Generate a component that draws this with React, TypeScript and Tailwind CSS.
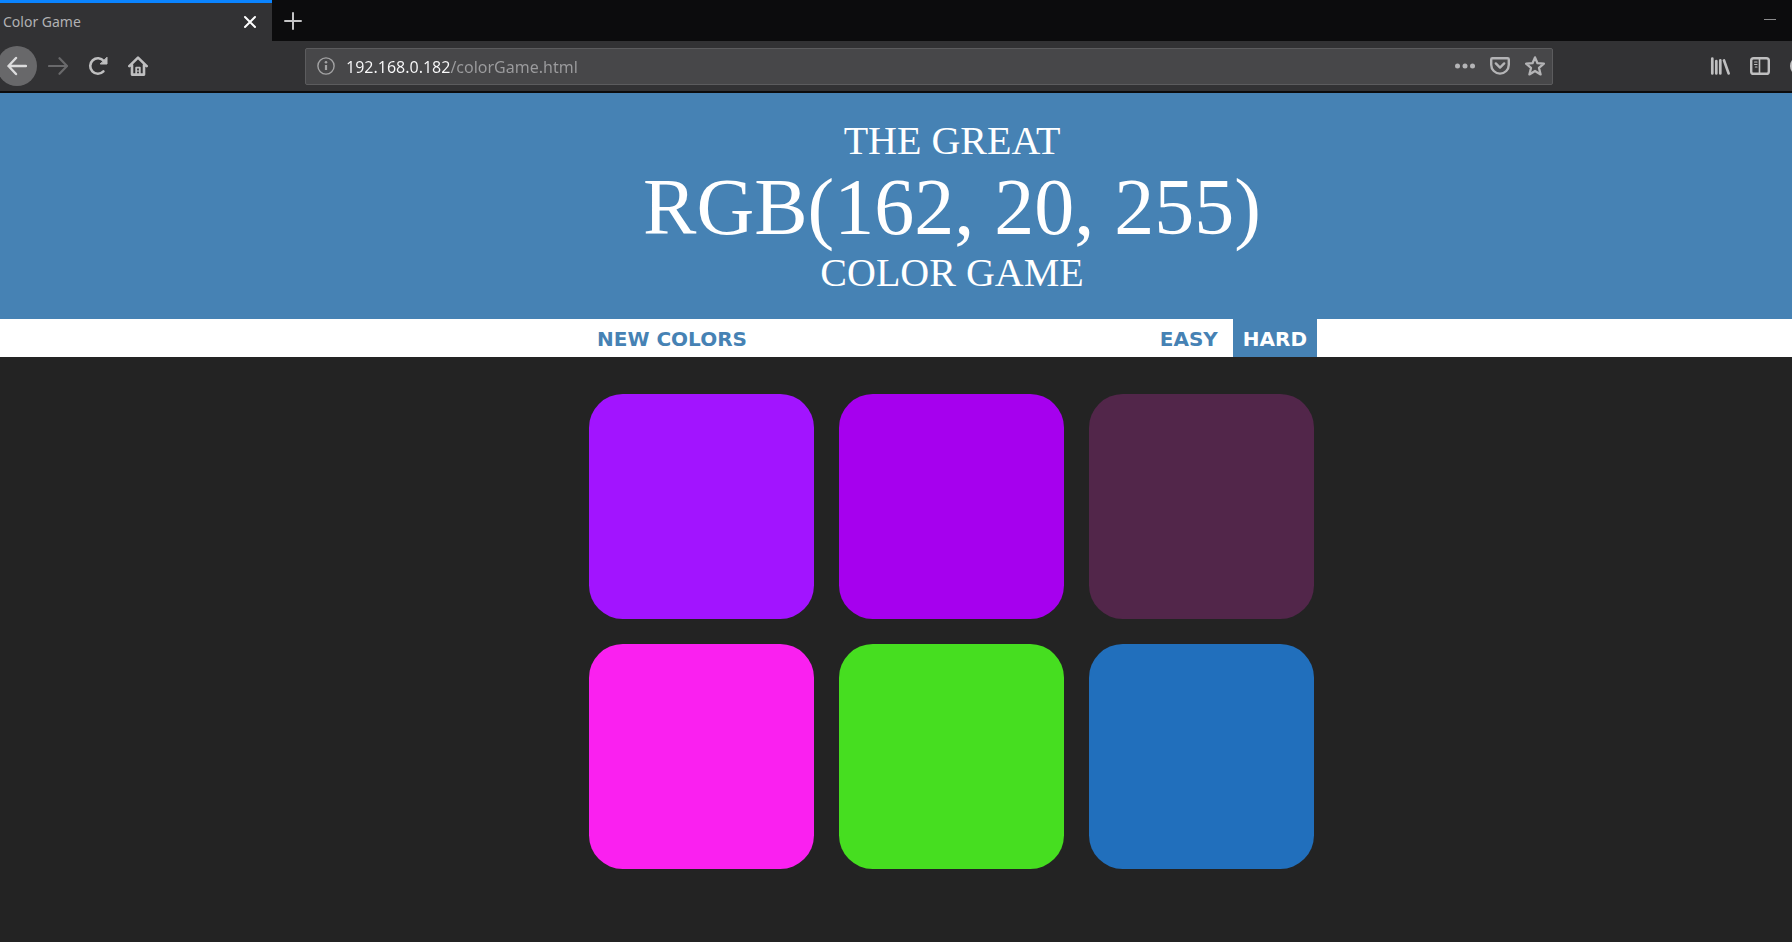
import type { ReactNode } from "react";

const squares = [
  { name: "rgb(162, 20, 255)", cls: "bg-[#a214ff]" },
  { name: "rgb(166, 0, 238)", cls: "bg-[#a600ee]" },
  { name: "rgb(82, 38, 74)", cls: "bg-[#52264a]" },
  { name: "rgb(250, 32, 240)", cls: "bg-[#fa20f0]" },
  { name: "rgb(70, 222, 32)", cls: "bg-[#46de20]" },
  { name: "rgb(33, 111, 188)", cls: "bg-[#216fbc]" },
];

function ToolButton({ label, children, className = "text-[#bfbfc0]" }: { label: string; children: ReactNode; className?: string }) {
  return (
    <button type="button" aria-label={label} className={`flex h-10 w-10 shrink-0 items-center justify-center ${className}`}>
      {children}
    </button>
  );
}

function FieldButton({ label, children }: { label: string; children: ReactNode }) {
  return (
    <button type="button" aria-label={label} className="flex h-full w-[35px] shrink-0 items-center justify-center text-[#b4b4b6]">
      {children}
    </button>
  );
}

function TabStrip() {
  return (
    <div className="flex h-[41px] bg-[#0c0c0d]">
      <div className="flex w-[272px] items-center justify-between border-t-3 border-[#0a84ff] bg-[#323234] pr-[15px] pl-[3px]">
        <span className="text-sm text-[#b1b1b3]">Color Game</span>
        <button type="button" aria-label="Close tab" className="text-white">
          <svg width="14" height="14" viewBox="0 0 14 14" fill="none" stroke="currentColor" strokeWidth="2" strokeLinecap="round">
            <path d="M2 2l10 10M12 2L2 12" />
          </svg>
        </button>
      </div>
      <button type="button" aria-label="New tab" className="flex w-[42px] items-center justify-center text-[#c4c4c5]">
        <svg width="18" height="18" viewBox="0 0 18 18" fill="none" stroke="currentColor" strokeWidth="2" strokeLinecap="round">
          <path d="M9 1v16M1 9h16" />
        </svg>
      </button>
      <button type="button" aria-label="Minimize" className="ml-auto flex w-11 items-center justify-center text-[#8c8c8d]">
        <svg width="12" height="3" viewBox="0 0 12 3" fill="currentColor">
          <path d="M0 0h12v1H0z" />
        </svg>
      </button>
    </div>
  );
}

function Toolbar() {
  return (
    <div className="flex h-[52px] items-center overflow-hidden border-b-2 border-[#0c0c0d] bg-[#323234]">
      <div className="flex w-[305px] shrink-0">
        <ToolButton label="Back" className="-ml-[3px] mr-px rounded-full bg-[#68686a] text-[#dcdcdd]">
          <svg width="20" height="20" viewBox="0 0 20 20" fill="none" stroke="currentColor" strokeWidth="2.4" strokeLinecap="round" strokeLinejoin="round">
            <path d="M19 10H1.5M9 2L1.5 10L9 18" />
          </svg>
        </ToolButton>
        <ToolButton label="Forward" className="text-[#69696b]">
          <svg width="20" height="20" viewBox="0 0 20 20" fill="none" stroke="currentColor" strokeWidth="2.2" strokeLinecap="round" strokeLinejoin="round">
            <path d="M1 10h18M11.5 2.2L19 10L11.5 17.8" />
          </svg>
        </ToolButton>
        <ToolButton label="Reload">
          <svg width="20" height="20" viewBox="0 0 20 20" fill="none" stroke="currentColor" strokeWidth="2.6" strokeLinecap="round" strokeLinejoin="round">
            <path d="M15.4 15.4A7.7 7.7 0 1 1 15.8 5" />
            <path d="M19 1.6V8h-6.4z" fill="currentColor" strokeWidth="1" />
          </svg>
        </ToolButton>
        <ToolButton label="Home">
          <svg width="20" height="20" viewBox="0 0 20 20" fill="none" stroke="currentColor" strokeWidth="2.6" strokeLinecap="round" strokeLinejoin="round">
            <path d="M1.3 10.2L10 1.6l8.7 8.6M4 9v9.6h12V9" />
            <path d="M8.2 18v-6.4h3.6V18" strokeWidth="1.8" />
            <path d="M10 14.5v1" strokeWidth="1.2" />
          </svg>
        </ToolButton>
      </div>
      <div className="flex h-[37px] min-w-0 flex-1 items-center rounded-xs border border-[#5c5c5e] bg-[#474749]">
        <span className="flex w-10 shrink-0 justify-center text-[#a3a3a4]">
          <svg width="18" height="18" viewBox="0 0 18 18" fill="none" stroke="currentColor" strokeWidth="1.4">
            <circle cx="9" cy="9" r="8.1" />
            <path d="M9 8v5" strokeWidth="2.2" />
            <circle cx="9" cy="5.2" r="1.3" fill="currentColor" stroke="none" />
          </svg>
        </span>
        <input
          type="text"
          aria-label="Address"
          defaultValue="192.168.0.182/colorGame.html"
          className="h-full min-w-0 flex-1 bg-[linear-gradient(to_right,#f9f9fa_104px,#9c9c9e_104px)] bg-clip-text pt-0.5 text-base text-transparent outline-none"
        />
        <FieldButton label="Page actions">
          <svg width="20" height="6" viewBox="0 0 20 6" fill="currentColor">
            <circle cx="2.5" cy="3" r="2.5" />
            <circle cx="10" cy="3" r="2.5" />
            <circle cx="17.5" cy="3" r="2.5" />
          </svg>
        </FieldButton>
        <FieldButton label="Save to Pocket">
          <svg width="20" height="18" viewBox="0 0 20 18" fill="none" stroke="currentColor" strokeWidth="2.4" strokeLinecap="round" strokeLinejoin="round">
            <path d="M2.4 1.2h15.2c.7 0 1.2.5 1.2 1.2v5.4a8.8 8.8 0 0 1-17.6 0V2.4c0-.7.5-1.2 1.2-1.2z" />
            <path d="M5.8 6.4L10 10.6l4.2-4.2" />
          </svg>
        </FieldButton>
        <FieldButton label="Bookmark this page">
          <svg width="20" height="20" viewBox="0 0 20 20" fill="none" stroke="currentColor" strokeWidth="2.3" strokeLinejoin="round">
            <path d="M10 1.4l2.5 5.8 6.4.5-4.9 4.2 1.6 6.5-5.6-3.4-5.6 3.4L6 11.9 1.1 7.7l6.4-.5z" />
          </svg>
        </FieldButton>
      </div>
      <div className="flex w-[239px] shrink-0 pl-[147px]">
        <ToolButton label="Library">
          <svg width="20" height="18" viewBox="0 0 20 18" fill="none" stroke="currentColor" strokeWidth="2.7" strokeLinecap="round">
            <path d="M2.3 1.6v14.8M6.3 4v12.4M10.3 3.4v13M14 3.4l4.6 13" />
          </svg>
        </ToolButton>
        <ToolButton label="Sidebars">
          <svg width="20" height="18" viewBox="0 0 20 18" fill="none" stroke="currentColor" strokeWidth="2.4" strokeLinecap="round">
            <rect x="1.2" y="1.2" width="17.6" height="15.6" rx="2.4" />
            <path d="M9.5 2v14" strokeWidth="1.6" strokeLinecap="butt" />
            <path d="M4.6 5h2.4M4.6 7.5h2.4M5.4 10h1.6" strokeWidth="1.2" />
          </svg>
        </ToolButton>
        <ToolButton label="Account">
          <svg width="20" height="20" viewBox="0 0 20 20" fill="none" stroke="currentColor" strokeWidth="2">
            <circle cx="10" cy="10" r="9" />
            <circle cx="10" cy="8" r="3" />
          </svg>
        </ToolButton>
      </div>
    </div>
  );
}

export default function App() {
  return (
    <div className="flex min-h-screen flex-col overflow-hidden bg-[#232323]">
      <div className="font-['Noto_Sans','Open_Sans',sans-serif]">
        <TabStrip />
        <Toolbar />
      </div>

      <header className="bg-[#4682b4] pt-[26px] pb-6 pl-28">
        <h1 className="text-center font-['Liberation_Serif',serif] text-[40px] leading-[44px] text-white">
          THE GREAT
          <span className="block text-[80px] leading-[88px]">RGB(162, 20, 255)</span>
          COLOR GAME
        </h1>
      </header>

      <nav className="bg-white pl-28">
        <div className="mx-auto flex h-[38px] max-w-[730px] font-['DejaVu_Sans',sans-serif] text-xl font-bold text-[#4682b4]">
          <button type="button" className="px-2.5 pt-0.5">NEW COLORS</button>
          <button type="button" className="mr-[5px] ml-auto px-2.5 pt-0.5">EASY</button>
          <button type="button" aria-pressed="true" className="bg-[#4682b4] px-2.5 pt-0.5 text-white">HARD</button>
        </div>
      </nav>

      <main className="pt-[37px] pb-[25px] pl-28">
        <div className="mx-auto grid max-w-[730px] grid-cols-3 gap-[25px] pr-[3px] pl-0.5">
          {squares.map((s) => (
            <button key={s.name} type="button" aria-label={s.name} className={`aspect-square rounded-[15%] ${s.cls}`} />
          ))}
        </div>
      </main>
    </div>
  );
}
